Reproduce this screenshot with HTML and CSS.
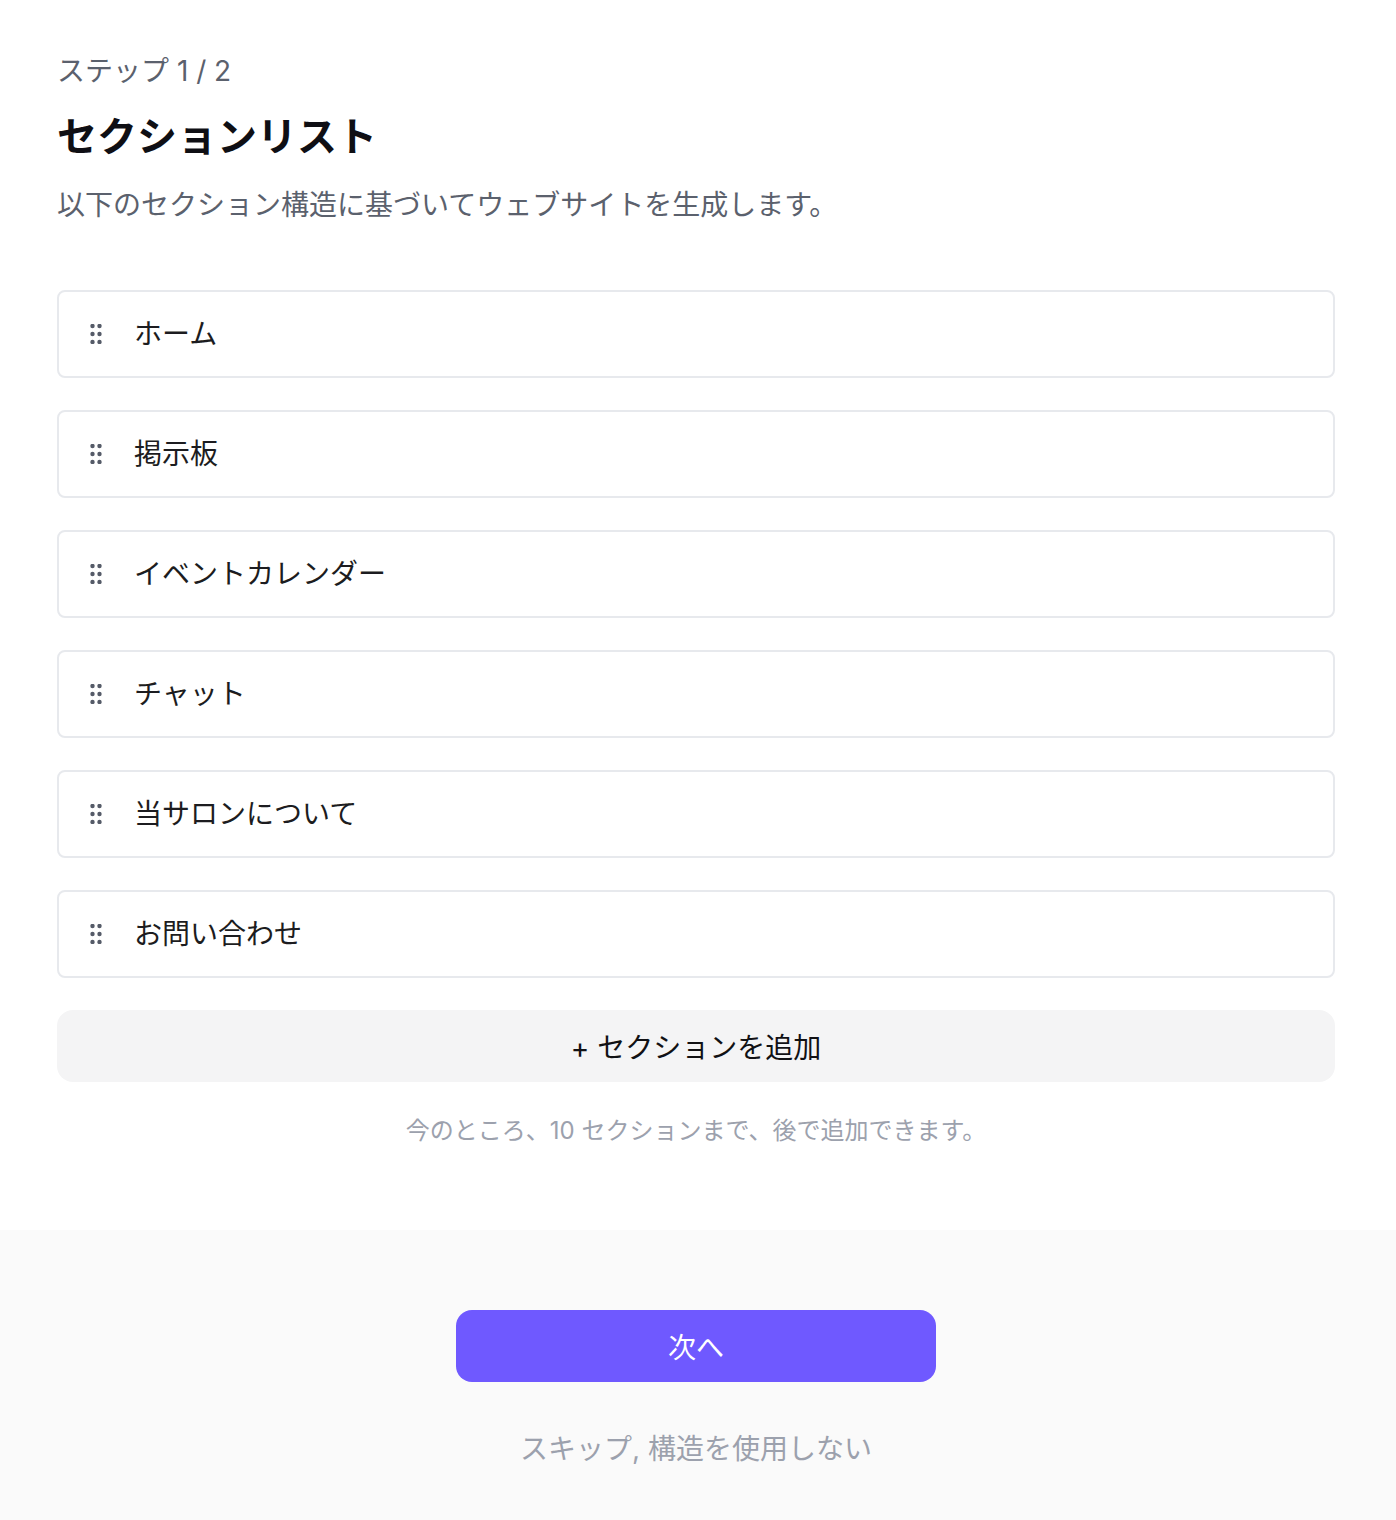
FILE: index.html
```html
<!DOCTYPE html>
<html lang="ja">
<head>
<meta charset="utf-8">
<title>セクションリスト</title>
<link rel="stylesheet" href="styles.css">
</head>
<body>
<main class="page">
  <section class="content">
    <p class="step">ステップ 1 / 2</p>
    <h1 class="title">セクションリスト</h1>
    <p class="subtitle">以下のセクション構造に基づいてウェブサイトを生成します。</p>
    <ul class="sections">
      <li class="section-item"><svg class="handle" viewBox="0 0 12 20" width="12" height="20"><circle cx="2.5" cy="2" r="2.2"/><circle cx="9.5" cy="2" r="2.2"/><circle cx="2.5" cy="10" r="2.2"/><circle cx="9.5" cy="10" r="2.2"/><circle cx="2.5" cy="18" r="2.2"/><circle cx="9.5" cy="18" r="2.2"/></svg><span class="label">ホーム</span></li>
      <li class="section-item"><svg class="handle" viewBox="0 0 12 20" width="12" height="20"><circle cx="2.5" cy="2" r="2.2"/><circle cx="9.5" cy="2" r="2.2"/><circle cx="2.5" cy="10" r="2.2"/><circle cx="9.5" cy="10" r="2.2"/><circle cx="2.5" cy="18" r="2.2"/><circle cx="9.5" cy="18" r="2.2"/></svg><span class="label">掲示板</span></li>
      <li class="section-item"><svg class="handle" viewBox="0 0 12 20" width="12" height="20"><circle cx="2.5" cy="2" r="2.2"/><circle cx="9.5" cy="2" r="2.2"/><circle cx="2.5" cy="10" r="2.2"/><circle cx="9.5" cy="10" r="2.2"/><circle cx="2.5" cy="18" r="2.2"/><circle cx="9.5" cy="18" r="2.2"/></svg><span class="label">イベントカレンダー</span></li>
      <li class="section-item"><svg class="handle" viewBox="0 0 12 20" width="12" height="20"><circle cx="2.5" cy="2" r="2.2"/><circle cx="9.5" cy="2" r="2.2"/><circle cx="2.5" cy="10" r="2.2"/><circle cx="9.5" cy="10" r="2.2"/><circle cx="2.5" cy="18" r="2.2"/><circle cx="9.5" cy="18" r="2.2"/></svg><span class="label">チャット</span></li>
      <li class="section-item"><svg class="handle" viewBox="0 0 12 20" width="12" height="20"><circle cx="2.5" cy="2" r="2.2"/><circle cx="9.5" cy="2" r="2.2"/><circle cx="2.5" cy="10" r="2.2"/><circle cx="9.5" cy="10" r="2.2"/><circle cx="2.5" cy="18" r="2.2"/><circle cx="9.5" cy="18" r="2.2"/></svg><span class="label">当サロンについて</span></li>
      <li class="section-item"><svg class="handle" viewBox="0 0 12 20" width="12" height="20"><circle cx="2.5" cy="2" r="2.2"/><circle cx="9.5" cy="2" r="2.2"/><circle cx="2.5" cy="10" r="2.2"/><circle cx="9.5" cy="10" r="2.2"/><circle cx="2.5" cy="18" r="2.2"/><circle cx="9.5" cy="18" r="2.2"/></svg><span class="label">お問い合わせ</span></li>
    </ul>
    <button class="add-btn" type="button">+ セクションを追加</button>
    <p class="note">今のところ、10 セクションまで、後で追加できます。</p>
  </section>
  <footer class="footer">
    <button class="next-btn" type="button">次へ</button>
    <p class="skip">スキップ, 構造を使用しない</p>
  </footer>
</main>
</body>
</html>
```

FILE: styles.css
```css
* { box-sizing: border-box; }
html, body { margin: 0; padding: 0; background: #ffffff; }
body {
  font-family: Inter, "Noto Sans CJK JP", "Noto Sans", sans-serif;
  color: #1f1f23;
}
.page {
  display: flex;
  flex-direction: column;
  min-height: 1520px;
}
.content {
  padding: 50px 61px 81px 57px;
  display: flex;
  flex-direction: column;
}
.step {
  margin: 0;
  font-size: 28px;
  line-height: 42px;
  color: #5b616d;
}
.title {
  margin: 17px 0 0;
  font-size: 40px;
  line-height: 56px;
  font-weight: 700;
  color: #0f0f14;
}
.subtitle {
  margin: 19px 0 0;
  font-size: 28px;
  line-height: 42px;
  color: #5b616d;
}
.sections {
  list-style: none;
  margin: 64px 0 0;
  padding: 0;
  display: flex;
  flex-direction: column;
  gap: 32px;
}
.section-item {
  height: 88px;
  border: 2px solid #e7e9ed;
  border-radius: 8px;
  display: flex;
  align-items: center;
  padding-left: 31px;
  gap: 32px;
  background: #fff;
}
.handle { fill: #555b68; flex: none; }
.label {
  font-size: 28px;
  line-height: 42px;
  color: #1c1c20;
}
.add-btn {
  margin-top: 32px;
  height: 72px;
  border: none;
  border-radius: 16px;
  background: #f4f4f5;
  font-family: inherit;
  font-size: 28px;
  color: #111114;
  cursor: pointer;
}
.note {
  margin: 31px 0 0;
  text-align: center;
  font-size: 24px;
  line-height: 36px;
  color: #9ca1ad;
}
.footer {
  flex: 1;
  background: #fafafa;
  display: flex;
  flex-direction: column;
  align-items: center;
  padding: 80px 4px 0 0;
}
.next-btn {
  width: 480px;
  height: 72px;
  border: none;
  border-radius: 16px;
  background: #6f59ff;
  color: #ffffff;
  font-family: inherit;
  font-size: 28px;
  cursor: pointer;
}
.skip {
  margin: 46px 0 0;
  font-size: 28px;
  line-height: 42px;
  color: #9ca1ad;
}
```
